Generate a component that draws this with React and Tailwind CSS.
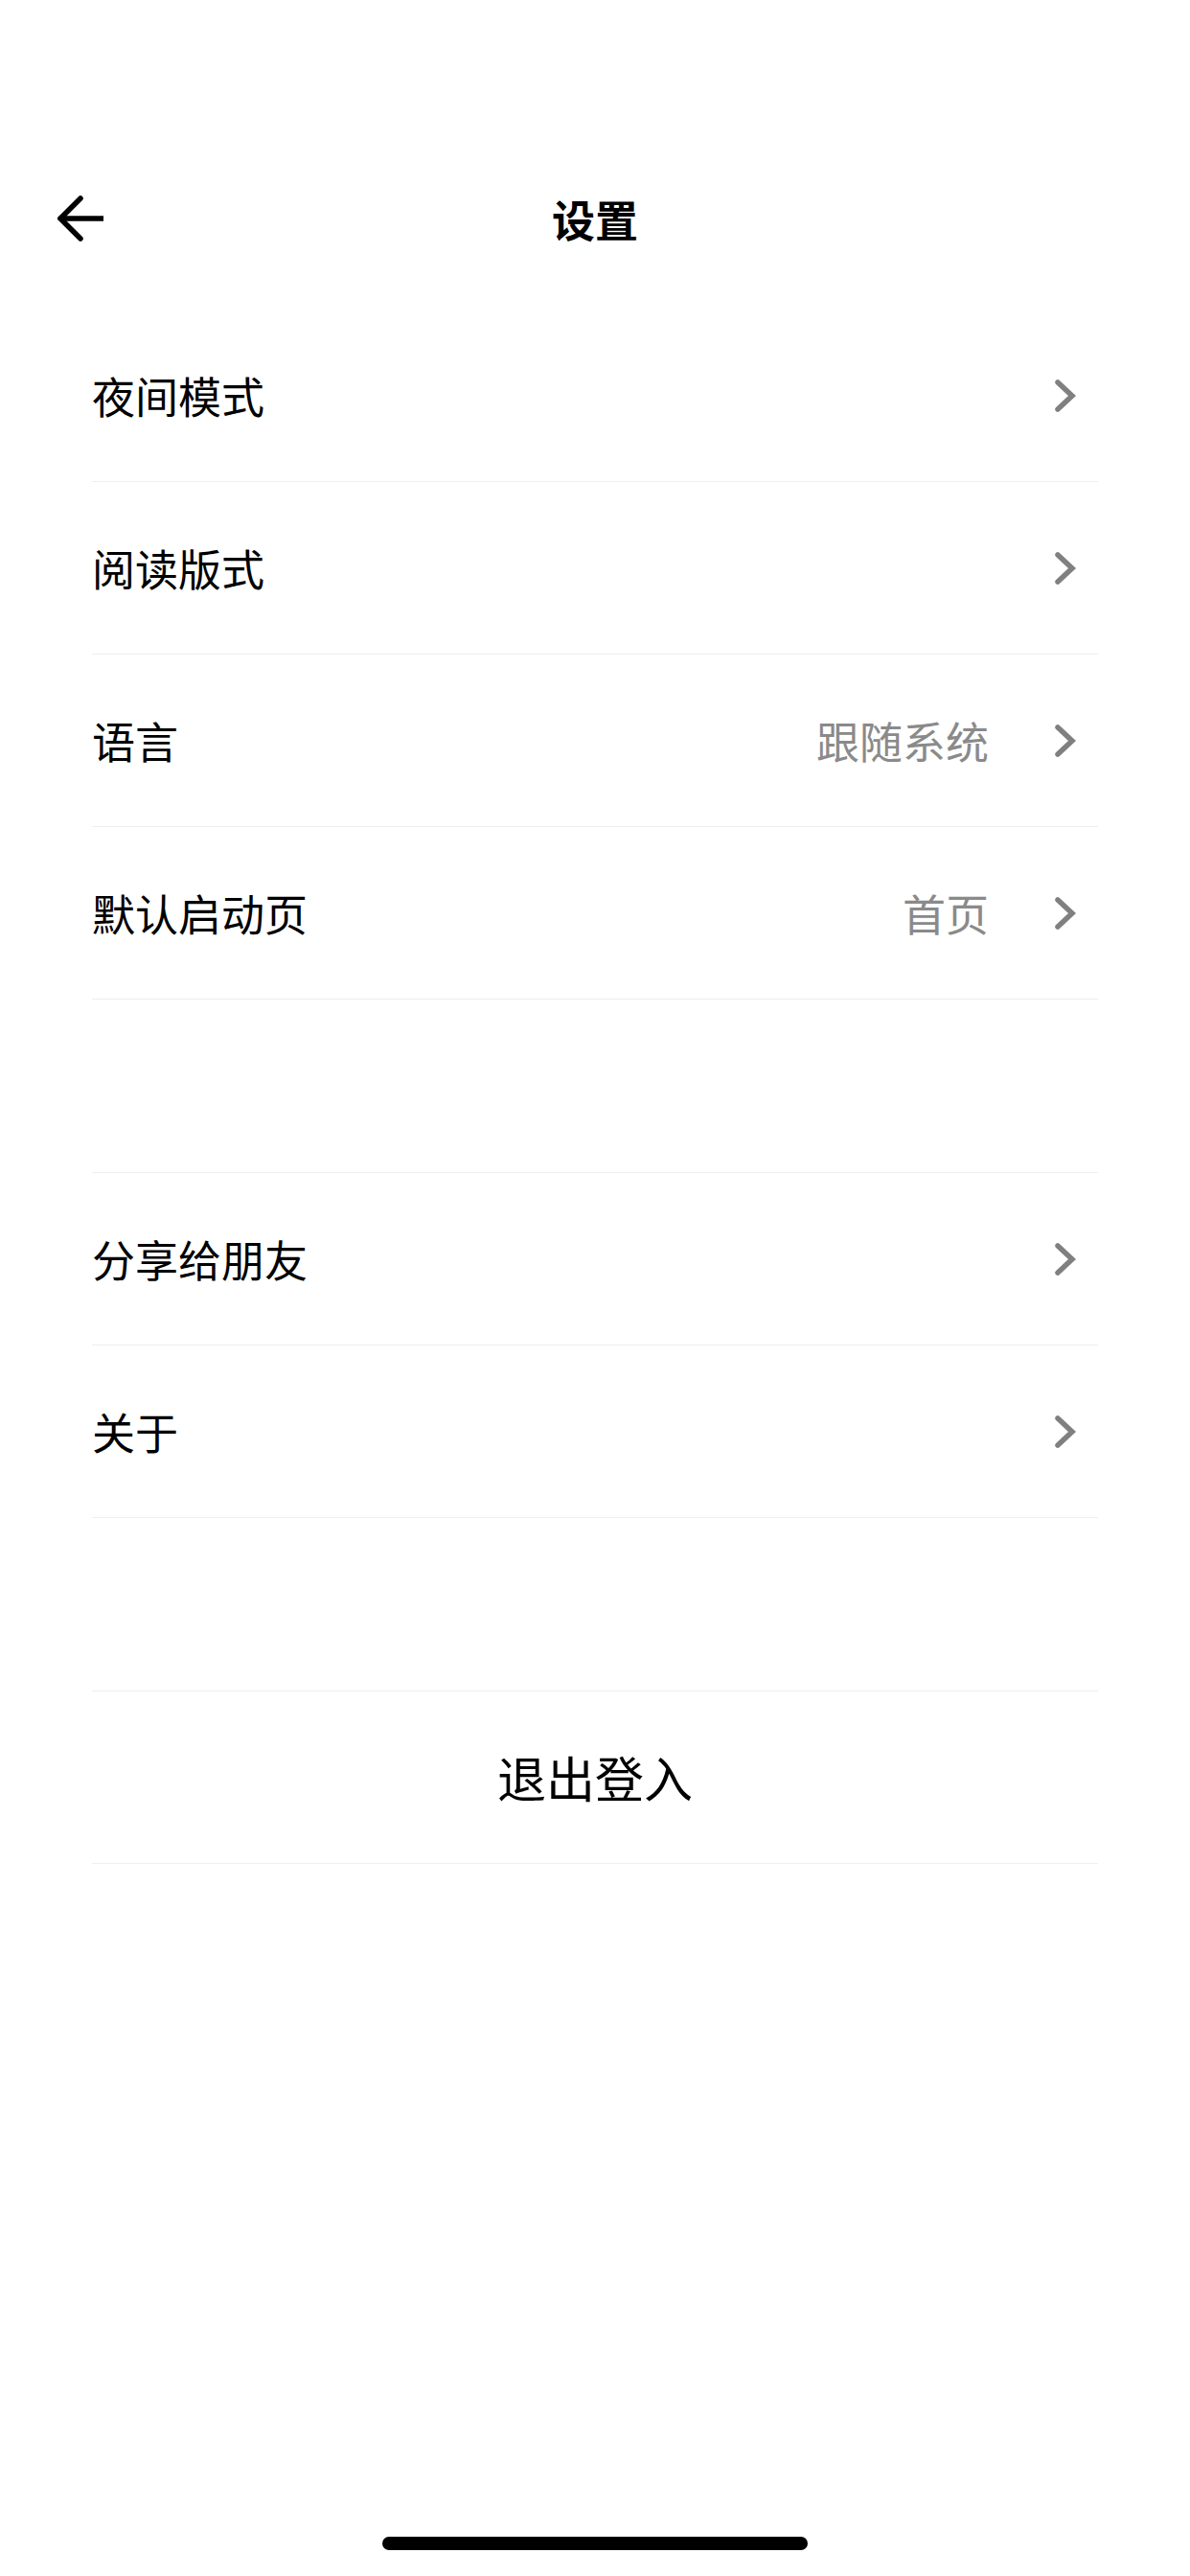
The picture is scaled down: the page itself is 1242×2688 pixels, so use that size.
import React from 'react'

const Chevron = () => (
  <svg width="24" height="36" viewBox="0 0 24 36" fill="none">
    <path d="M4 4 L19 18 L4 32" stroke="#808080" strokeWidth={5.5} strokeLinecap="round" strokeLinejoin="miter" />
  </svg>
)

const BackArrow = () => (
  <svg width="48" height="48" viewBox="0 0 48 48" fill="none">
    <path d="M48 24 H4" stroke="#000" strokeWidth={5.5} />
    <path d="M24 3 L3 24 L24 45" stroke="#000" strokeWidth={5.5} strokeLinecap="round" strokeLinejoin="miter" />
  </svg>
)

const Row = ({ label, value }) => (
  <div className="h-[180px] border-b border-[#eeeeee] flex items-center justify-between">
    <span className="text-[45px] text-black leading-none">{label}</span>
    <div className="flex items-center gap-[68px] pr-[22px]">
      {value && <span className="text-[45px] text-[#8a8a8a] leading-none">{value}</span>}
      <Chevron />
    </div>
  </div>
)

const App = () => {
  return (
    <div
      className="h-[2688px] bg-white flex flex-col"
      style={{ fontFamily: '"Noto Sans CJK SC", "Noto Sans", sans-serif' }}
    >
      {/* Nav bar */}
      <div className="mt-[168px] h-[120px] px-[60px] grid grid-cols-[1fr_auto_1fr] items-center">
        <div className="flex items-center">
          <BackArrow />
        </div>
        <h1 className="text-[45px] font-bold text-black leading-none">设置</h1>
        <div />
      </div>

      {/* Settings list */}
      <div className="mt-[35px] px-[96px]">
        <div>
          <Row label="夜间模式" />
          <Row label="阅读版式" />
          <Row label="语言" value="跟随系统" />
          <Row label="默认启动页" value="首页" />
        </div>

        <div className="mt-[180px] border-t border-[#eeeeee]">
          <Row label="分享给朋友" />
          <Row label="关于" />
        </div>

        <div className="mt-[180px] border-t border-[#eeeeee]">
          <div className="h-[180px] border-b border-[#eeeeee] flex items-center justify-center">
            <span className="text-[51px] text-black leading-none">退出登入</span>
          </div>
        </div>
      </div>

      {/* Home indicator */}
      <div className="mt-auto pb-[27px] flex justify-center">
        <div className="w-[444px] h-[14px] rounded-full bg-black" />
      </div>
    </div>
  )
}

export default App
